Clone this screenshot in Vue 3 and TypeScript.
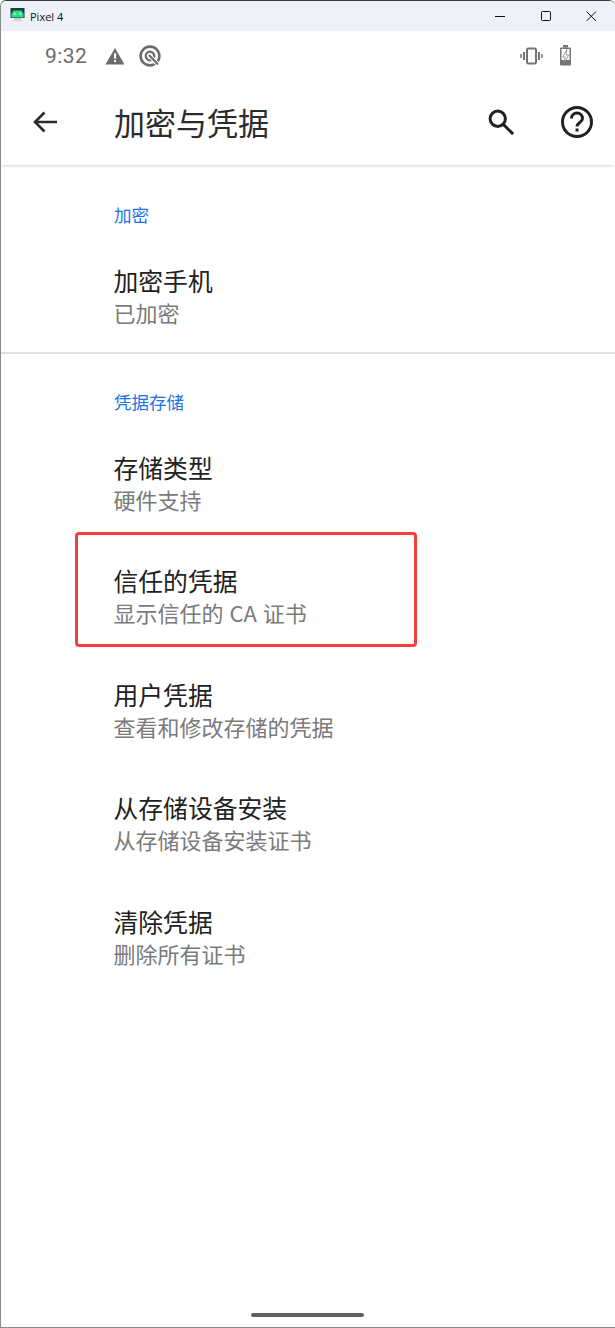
<script setup lang="ts">
interface Row { title: string; sub: string; marked?: boolean }
const first: Row[] = [{ title: '加密手机', sub: '已加密' }]
const second: Row[] = [
  { title: '存储类型', sub: '硬件支持' },
  { title: '信任的凭据', sub: '显示信任的 CA 证书', marked: true },
  { title: '用户凭据', sub: '查看和修改存储的凭据' },
  { title: '从存储设备安装', sub: '从存储设备安装证书' },
  { title: '清除凭据', sub: '删除所有证书' },
]
</script>

<template>
  <div class="window">
    <header class="titlebar">
      <svg class="logo" width="16" height="16" viewBox="0 0 16 16">
        <rect x="0.5" y="0" width="14" height="10" fill="#1c3a40" />
        <path d="M1.5 9.5V5.5L3.5 2.5H11.5L13.5 5.5V9.5z" fill="#2fdc87" />
        <rect x="4" y="5" width="1.5" height="1.5" fill="#d8ffe8" />
        <rect x="9.5" y="5" width="1.5" height="1.5" fill="#d8ffe8" />
        <rect x="4" y="10" width="7" height="2" fill="#c9c9c9" />
        <rect x="2.5" y="12" width="10" height="1.5" fill="#dedede" />
      </svg>
      <span class="win-title">Pixel 4</span>
      <div class="win-controls">
        <svg width="12" height="12" viewBox="0 0 12 12"><path d="M1 6.5h10" stroke="#111" stroke-width="1" fill="none" /></svg>
        <svg width="12" height="12" viewBox="0 0 12 12"><rect x="1.5" y="1.5" width="9" height="9" rx="1" stroke="#111" stroke-width="1" fill="none" /></svg>
        <svg width="12" height="12" viewBox="0 0 12 12"><path d="M1.5 1.5l9.5 9.5M11 1.5l-9.5 9.5" stroke="#111" stroke-width="1" fill="none" /></svg>
      </div>
    </header>

    <div class="status">
      <span class="time">9:32</span>
      <svg class="st-warn" width="20" height="18" viewBox="0 0 22 20" preserveAspectRatio="none">
        <path d="M11 1L21.5 19.5H.5z" fill="#6b6b6b" />
        <rect x="10" y="7" width="2.2" height="6" fill="#fff" />
        <rect x="10" y="14.5" width="2.2" height="2.2" fill="#fff" />
      </svg>
      <svg class="st-q" width="24" height="24" viewBox="0 0 24 24" fill="none">
        <circle cx="12" cy="12" r="9.4" stroke="#6b6b6b" stroke-width="2.6" />
        <circle cx="12" cy="12" r="4.2" stroke="#6b6b6b" stroke-width="2.4" />
        <path d="M10 10l10 10.5" stroke="#fff" stroke-width="4" />
        <path d="M11 11l9 9.5" stroke="#6b6b6b" stroke-width="2.2" />
      </svg>
      <span class="spacer"></span>
      <svg class="st-vib" width="23" height="18" viewBox="0 0 23 18" fill="none" stroke="#757575">
        <rect x="7" y="1.5" width="9" height="15" rx="1.2" stroke-width="2" />
        <path d="M4 5v8M19 5v8" stroke-width="2" />
        <path d="M1 7v4M22 7v4" stroke-width="1.6" />
      </svg>
      <svg class="st-bat" width="13" height="21" viewBox="0 0 13 21">
        <rect x="4" y="0" width="5" height="2.5" fill="#757575" />
        <rect x="1" y="2.5" width="11" height="18" rx="1" fill="#757575" />
        <rect x="2.5" y="4" width="8" height="11" fill="#fff" />
        <path d="M7.8 4.5L3.8 12h2.4l-1 6.5L9.6 10H7z" fill="#fff" stroke="#757575" stroke-width="0.7" />
      </svg>
    </div>

    <div class="appbar">
      <svg class="back" width="28" height="24" viewBox="0 0 28 24" fill="none" stroke="#2b2b2b" stroke-width="2.6">
        <path d="M26 12H4M13.5 2.5L4 12l9.5 9.5" />
      </svg>
      <h1 class="app-title">加密与凭据</h1>
      <svg class="search" width="28" height="28" viewBox="0 0 30 30" fill="none" stroke="#212121">
        <circle cx="11.5" cy="11.5" r="8.2" stroke-width="3.2" />
        <path d="M17.5 17.5L28 28" stroke-width="3.2" />
      </svg>
      <svg class="help" width="34" height="34" viewBox="0 0 34 34" fill="none" stroke="#212121">
        <circle cx="17" cy="17" r="14.5" stroke-width="3" />
        <path d="M11.5 13.5a5.5 5.5 0 0 1 11 0c0 4-5.5 4-5.5 8" stroke-width="3" />
        <rect x="15.5" y="23.5" width="3" height="3" fill="#212121" stroke="none" />
      </svg>
    </div>

    <main class="content">
      <section class="group">
        <h2 class="section">加密</h2>
        <div v-for="r in first" :key="r.title" class="row">
          <div class="row-title">{{ r.title }}</div>
          <div class="row-sub">{{ r.sub }}</div>
        </div>
      </section>
      <hr class="divider" />
      <section class="group second">
        <h2 class="section">凭据存储</h2>
        <div v-for="r in second" :key="r.title" class="row">
          <div class="row-title">{{ r.title }}</div>
          <div class="row-sub">{{ r.sub }}</div>
          <span v-if="r.marked" class="mark"></span>
        </div>
      </section>
    </main>

    <div class="home"></div>
  </div>
</template>

<style>
html, body { margin: 0; background: #fff; }
</style>

<style scoped>
.window {
  width: 615px;
  height: 1328px;
  box-sizing: border-box;
  border-top: 1px solid #3a3a3a;
  border-left: 1px solid #8a8a8a;
  border-bottom: 1px solid #8a8a8a;
  border-top-left-radius: 6px;
  border-top-right-radius: 6px;
  background: #fff;
  display: flex;
  flex-direction: column;
  position: relative;
  overflow: hidden;
  font-family: "Noto Sans CJK SC", Roboto, sans-serif;
}
.titlebar {
  height: 30px;
  flex: none;
  background: #eef1f8;
  display: flex;
  align-items: center;
  padding-left: 9px;
}
.logo { margin-right: 4px; }
.win-title {
  font: 11px "Open Sans", "Liberation Sans", sans-serif;
  color: #111;
}
.win-controls {
  margin-left: auto;
  display: flex;
  gap: 33.5px;
  padding-right: 18px;
}
.status {
  height: 50px;
  box-sizing: border-box;
  flex: none;
  display: flex;
  align-items: center;
  padding: 0 43px 1px 44px;
}
.time {
  font: 21px Roboto, sans-serif;
  color: #6b6b6b;
  letter-spacing: 0.4px;
}
.st-warn { margin-left: 18px; }
.st-q { margin-left: 13px; }
.spacer { flex: 1; }
.st-bat { margin-left: 16px; }
.appbar {
  height: 84px;
  box-sizing: border-box;
  flex: none;
  display: flex;
  align-items: center;
  padding: 0 21px 2px 30px;
  box-shadow: 0 2px 3px -1px rgba(0, 0, 0, 0.18);
  position: relative;
}
.app-title {
  margin: 0 0 0 55px;
  font-size: 31px;
  font-weight: 400;
  line-height: 40px;
  color: #2b2b2b;
  flex: 1;
}
.help { margin-left: 45px; }
.content { flex: 1; }
.group { padding-top: 37px; }
.group.second { padding-top: 35px; }
.section {
  margin: 0 0 0 113px;
  font-size: 17.5px;
  font-weight: 400;
  line-height: 26px;
  color: #1a73e8;
}
.row {
  position: relative;
  height: 113.5px;
  box-sizing: border-box;
  padding: 24px 0 0 112.5px;
}
.section + .row { margin-top: 11px; }
.row-title {
  font-size: 24.8px;
  line-height: 34px;
  color: #212121;
}
.row-sub {
  font-size: 22px;
  line-height: 30px;
  color: #7a7a7a;
  word-spacing: 1px;
}
.divider {
  margin: -1px 0 0;
  border: none;
  border-top: 2px solid #e0e0e0;
}
.mark {
  position: absolute;
  left: 74px;
  top: -7px;
  width: 342px;
  height: 115px;
  box-sizing: border-box;
  border: 3px solid #f5403f;
  border-radius: 4px;
}
.home {
  position: absolute;
  left: 250px;
  top: 1312px;
  width: 113px;
  height: 4px;
  border-radius: 2px;
  background: #616161;
}
</style>
